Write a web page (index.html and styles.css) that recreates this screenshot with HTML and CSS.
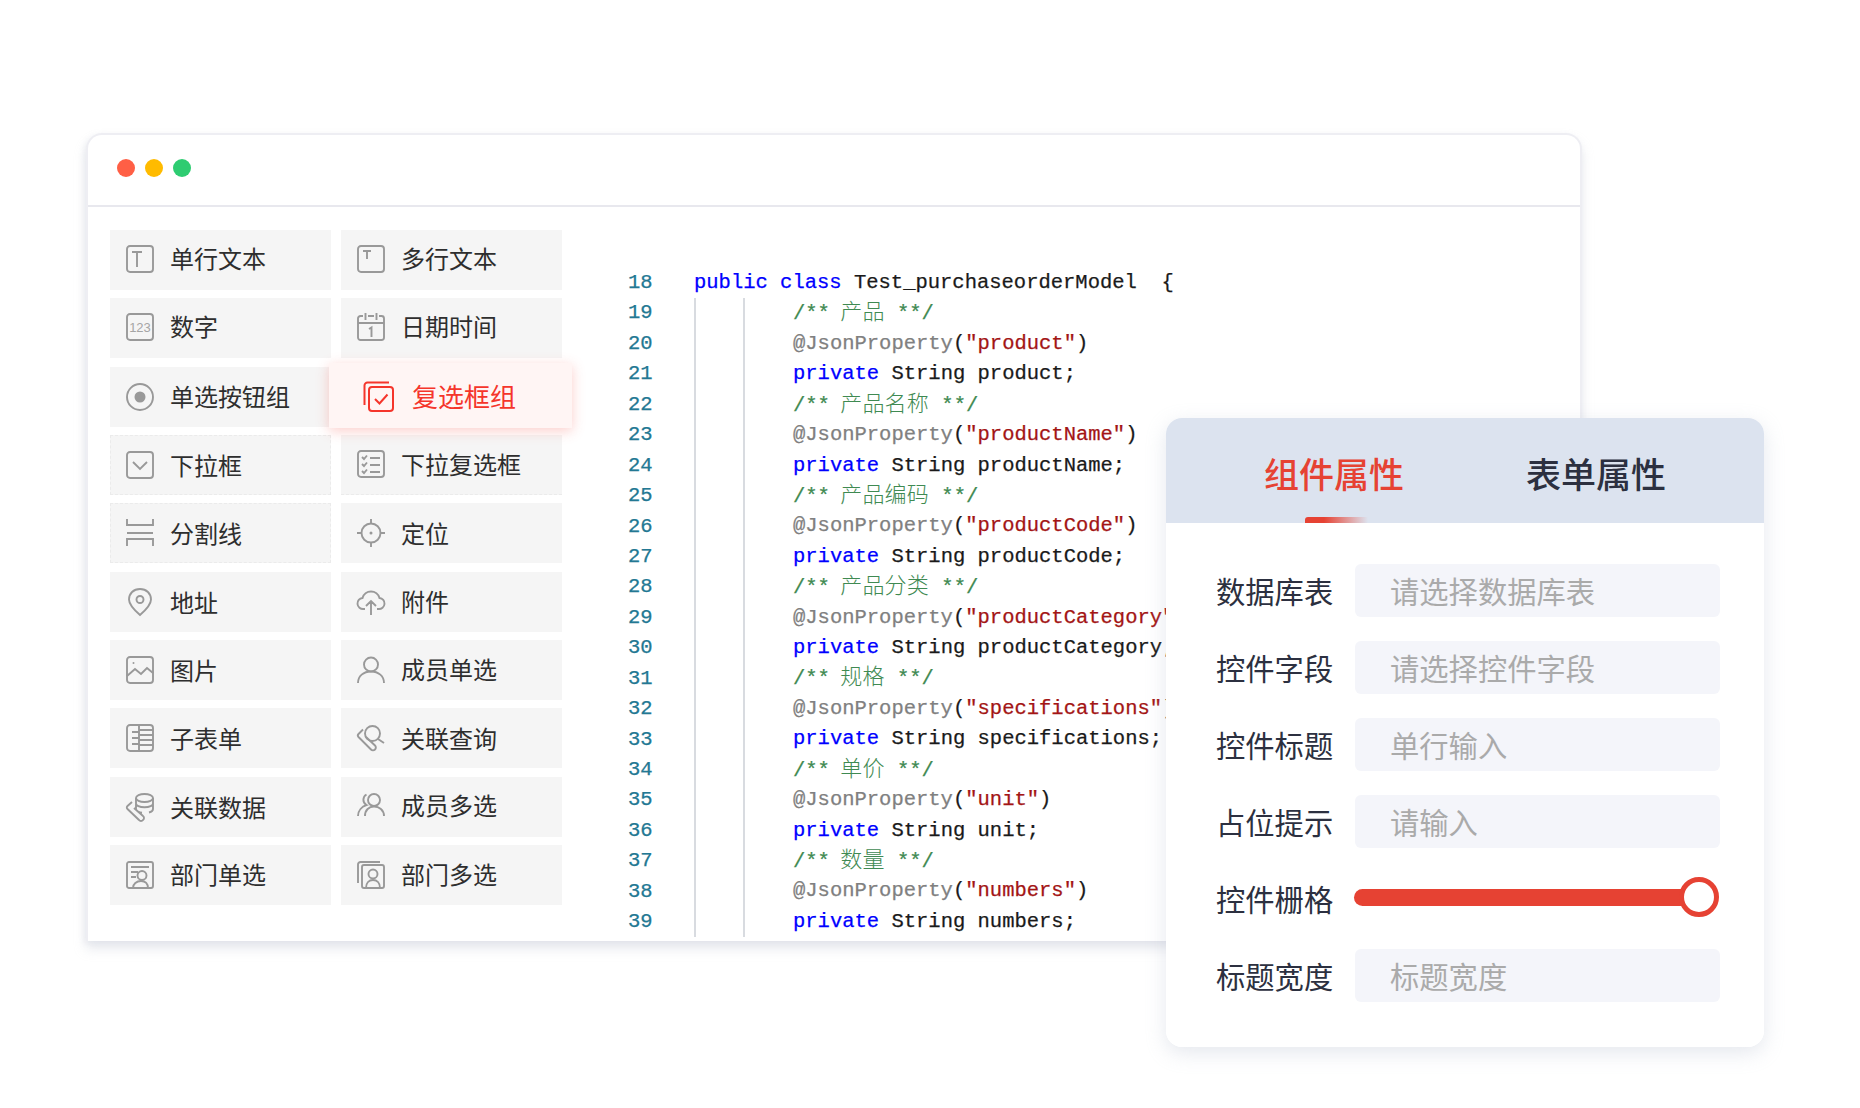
FILE: index.html
```html
<!DOCTYPE html>
<html lang="zh-CN">
<head>
<meta charset="utf-8">
<title>表单设计</title>
<link rel="stylesheet" href="styles.css">
</head>
<body>
<div class="stage">
  <section class="window">
    <header class="titlebar">
      <span class="dot dot-red"></span><span class="dot dot-yellow"></span><span class="dot dot-green"></span>
    </header>
    <div class="window-body">
      <div class="palette">
        <div class="cell cell-top"><svg class="ic" viewBox="0 0 28 28"><rect x="1" y="1" width="26" height="26" rx="3"/><path d="M6 7h10M11 7v15"/></svg><span>单行文本</span></div>
        <div class="cell cell-top"><svg class="ic" viewBox="0 0 28 28"><rect x="1" y="1" width="26" height="26" rx="3"/><path d="M6 6h8M10 6v8"/></svg><span>多行文本</span></div>
        <div class="cell cell-top"><svg class="ic" viewBox="0 0 28 28"><rect x="1" y="1" width="26" height="26" rx="3"/><text x="14" y="19" class="ic-text">123</text></svg><span>数字</span></div>
        <div class="cell cell-top"><svg class="ic" viewBox="0 0 28 28"><path d="M6 3H3.500A2.500 2.500 0 0 0 1 5.500V24.500A2.500 2.500 0 0 0 3.500 27H24.500A2.500 2.500 0 0 0 27 24.500V5.500A2.500 2.500 0 0 0 24.500 3H22M11 3h6M1 10h26M8.500 0v7M19.500 0v7M12 16l2.500-1.500V24"/></svg><span>日期时间</span></div>
        <div class="cell cell-up"><svg class="ic" viewBox="0 0 28 28"><circle cx="14" cy="14" r="13"/><circle cx="14" cy="14" r="5.500" class="ic-fill"/></svg><span>单选按钮组</span></div>
        <div class="cell cell-active"><svg class="ic-red" viewBox="0 0 31 31"><path d="M26 1.500H4.500A3 3 0 0 0 1.500 4.500V24"/><rect x="6" y="6" width="24" height="24" rx="3"/><path d="M12 18l4.500 4.500 8-9"/></svg><span>复选框组</span></div>
        <div class="cell cell-dashed"><svg class="ic" viewBox="0 0 28 28"><rect x="1" y="1" width="26" height="26" rx="3"/><path d="M7 11l7 7 7-7"/></svg><span>下拉框</span></div>
        <div class="cell cell-dash-bottom"><svg class="ic" viewBox="0 0 28 28"><rect x="1" y="1" width="26" height="26" rx="3"/><path d="M5 7l2 2 3-3.500M5 14l2 2 3-3.500M5 21l2 2 3-3.500M13 8h10M13 15h10M13 22h10"/></svg><span>下拉复选框</span></div>
        <div class="cell cell-dashed"><svg class="ic" viewBox="0 0 28 28"><path d="M1 0v6h26V0M1 14h26M1 27v-7h26v7"/></svg><span>分割线</span></div>
        <div class="cell"><svg class="ic" viewBox="0 0 28 28"><circle cx="14" cy="14" r="9.500"/><circle cx="14" cy="14" r="1.500" class="ic-fill"/><path d="M14 0v4.500M14 23.500V28M0 14h4.500M23.500 14H28"/></svg><span>定位</span></div>
        <div class="cell"><svg class="ic" viewBox="0 0 28 28"><path d="M14 1C7.500 1 3 5.500 3 11.500c0 6 7 12 11 15.500 4-3.500 11-9.500 11-15.500C25 5.500 20.500 1 14 1z"/><circle cx="14" cy="11.500" r="3.500"/></svg><span>地址</span></div>
        <div class="cell cell-up"><svg class="ic" viewBox="0 0 28 28"><path d="M8 21H6.500A5.500 5.500 0 0 1 5.500 10 8.800 8.800 0 0 1 22.500 10 5.500 5.500 0 0 1 21.500 21H20M14 27V13M9 18l5-5 5 5"/></svg><span>附件</span></div>
        <div class="cell"><svg class="ic" viewBox="0 0 28 28"><rect x="1" y="1" width="26" height="26" rx="3"/><path d="M1 20l8-7 6 5 6-6 6 5"/><circle cx="7.500" cy="7" r="1" class="ic-fill"/></svg><span>图片</span></div>
        <div class="cell cell-up"><svg class="ic" viewBox="0 0 28 28"><circle cx="14" cy="8.500" r="7"/><path d="M1 27c0-7 5.500-11.500 13-11.500S27 20 27 27"/></svg><span>成员单选</span></div>
        <div class="cell"><svg class="ic" viewBox="0 0 28 28"><rect x="1" y="1" width="26" height="26" rx="3"/><path d="M13 1v26M6 8h7M6 14h7M6 20h7M13 6h14M13 11h14M13 16h14M13 21h14"/></svg><span>子表单</span></div>
        <div class="cell"><svg class="ic" viewBox="0 0 28 28"><circle cx="15.500" cy="9.500" r="7.500"/><path d="M21 15l6 4M6 5.500L1.500 10a2.200 2.200 0 0 0 0 3L14 25.500a2.800 2.800 0 0 0 4 0 2.800 2.800 0 0 0 0-4L9 13"/></svg><span>关联查询</span></div>
        <div class="cell"><svg class="ic" viewBox="0 0 28 28"><ellipse cx="18.500" cy="5" rx="8.500" ry="4"/><path d="M10 5v11c0 2 3.500 3.500 6 3.800M27 5v11c0 1.500-1.500 2.800-4 3.500M10 10.500c0 2 3.500 3.800 8.500 3.800s8.500-1.800 8.500-3.800M6 9L1.500 13a2 2 0 0 0 0 3L13 27a2.500 2.500 0 0 0 4 0 2.500 2.500 0 0 0 0-4L8 15"/></svg><span>关联数据</span></div>
        <div class="cell cell-top"><svg class="ic" viewBox="0 0 28 28"><circle cx="17" cy="8" r="6"/><path d="M8 24c0-6 4-9.500 9-9.500s10 3.500 10 9.500M9.500 2.500a6 6 0 0 0 0 10.500C5 14.500 1 18.500 1 24"/></svg><span>成员多选</span></div>
        <div class="cell cell-up"><svg class="ic" viewBox="0 0 28 28"><rect x="1" y="1" width="26" height="26" rx="2"/><path d="M5 6h18M5 11h7M5 16h5M7 27c0-4 3.500-7 8-7s7 3 7 7"/><circle cx="16" cy="14.500" r="4.500"/></svg><span>部门单选</span></div>
        <div class="cell cell-up"><svg class="ic" viewBox="0 0 28 28"><path d="M23 1H3.500A2.500 2.500 0 0 0 1 3.500V22"/><rect x="5" y="4" width="22" height="23" rx="2"/><circle cx="16" cy="13" r="4.500"/><path d="M9 27c0-5 3-8 7-8s7 3 7 8"/></svg><span>部门多选</span></div>
      </div>
      <div class="code">
        <div class="numbers">
          <div>18</div><div>19</div><div>20</div><div>21</div><div>22</div><div>23</div><div>24</div><div>25</div><div>26</div><div>27</div><div>28</div><div>29</div><div>30</div><div>31</div><div>32</div><div>33</div><div>34</div><div>35</div><div>36</div><div>37</div><div>38</div><div>39</div>
        </div>
        <div class="source">
          <div class="ln"><span class="kw">public class</span> Test_purchaseorderModel  {</div>
          <div class="guides">
            <div class="ln cm">/** <span class="cn">产品</span> **/</div>
            <div class="ln"><span class="an">@JsonProperty</span>(<span class="st">"product"</span>)</div>
            <div class="ln"><span class="kw">private</span> String product;</div>
            <div class="ln cm">/** <span class="cn">产品名称</span> **/</div>
            <div class="ln"><span class="an">@JsonProperty</span>(<span class="st">"productName"</span>)</div>
            <div class="ln"><span class="kw">private</span> String productName;</div>
            <div class="ln cm">/** <span class="cn">产品编码</span> **/</div>
            <div class="ln"><span class="an">@JsonProperty</span>(<span class="st">"productCode"</span>)</div>
            <div class="ln"><span class="kw">private</span> String productCode;</div>
            <div class="ln cm">/** <span class="cn">产品分类</span> **/</div>
            <div class="ln"><span class="an">@JsonProperty</span>(<span class="st">"productCategory"</span>)</div>
            <div class="ln"><span class="kw">private</span> String productCategory;</div>
            <div class="ln cm">/** <span class="cn">规格</span> **/</div>
            <div class="ln"><span class="an">@JsonProperty</span>(<span class="st">"specifications"</span>)</div>
            <div class="ln"><span class="kw">private</span> String specifications;</div>
            <div class="ln cm">/** <span class="cn">单价</span> **/</div>
            <div class="ln"><span class="an">@JsonProperty</span>(<span class="st">"unit"</span>)</div>
            <div class="ln"><span class="kw">private</span> String unit;</div>
            <div class="ln cm">/** <span class="cn">数量</span> **/</div>
            <div class="ln"><span class="an">@JsonProperty</span>(<span class="st">"numbers"</span>)</div>
            <div class="ln"><span class="kw">private</span> String numbers;</div>
          </div>
        </div>
      </div>
    </div>
  </section>

  <aside class="panel">
    <nav class="tabs">
      <div class="tab tab-active">组件属性</div>
      <div class="tab">表单属性</div>
    </nav>
    <div class="form">
      <div class="row"><label>数据库表</label><div class="field">请选择数据库表</div></div>
      <div class="row"><label>控件字段</label><div class="field">请选择控件字段</div></div>
      <div class="row"><label>控件标题</label><div class="field">单行输入</div></div>
      <div class="row"><label>占位提示</label><div class="field">请输入</div></div>
      <div class="row"><label>控件栅格</label><div class="slider"><div class="track"></div><div class="thumb"></div></div></div>
      <div class="row"><label>标题宽度</label><div class="field">标题宽度</div></div>
    </div>
  </aside>
</div>
</body>
</html>
```

FILE: styles.css
```css
* { box-sizing: border-box; }
html, body { margin: 0; background: #fff; }
body { font-family: "Noto Sans CJK SC", "Noto Sans", sans-serif; overflow: hidden; }
.stage { position: relative; width: 1860px; height: 1108px; padding: 133px 0 0 86px; }

.window {
  width: 1496px; height: 808px; background: #fff;
  border: 2px solid #eeeef3; border-bottom: 0; border-radius: 16px 16px 0 0;
  box-shadow: 0 8px 12px rgba(190, 195, 210, .35), -2px 2px 6px rgba(190, 195, 210, .2);
}
.titlebar {
  height: 72px; display: flex; align-items: center; gap: 10px; padding: 0 0 5px 29px;
  border-bottom: 2px solid #e8e8ee;
}
.dot { width: 18px; height: 18px; border-radius: 50%; }
.dot-red { background: #ff5f45; }
.dot-yellow { background: #ffbb00; }
.dot-green { background: #2ecc71; }

.window-body { display: flex; height: 734px; overflow: hidden; }
.palette {
  width: 480px; flex: none; padding: 23px 0 0 22px;
  display: grid; grid-template-columns: 221px 221px; column-gap: 10px;
  grid-template-rows: repeat(10, 60px); row-gap: 8.33px; align-content: start;
}
.cell {
  display: flex; align-items: center; gap: 16px; padding-left: 16px;
  background: #f5f5f5; color: #2e2e2e; font-size: 24px; line-height: 1;
  white-space: nowrap;
}
.cell-top { padding-bottom: 2px; }
.cell-top span { padding-bottom: 2px; }
.cell-up span { padding-bottom: 2px; }
.cell-dashed { border: 1px dashed #ebebeb; padding-left: 15px; }
.cell-dash-bottom { border-bottom: 1px dashed #ebebeb; }
.ic { width: 28px; height: 28px; flex: none; fill: none; stroke: #999; stroke-width: 1.9; overflow: visible; }
.ic-fill { fill: #999; stroke: none; }
.ic-text { fill: #a5a5a5; stroke: none; font-family: "Liberation Sans", sans-serif; font-size: 13px; text-anchor: middle; }
.cell-active {
  position: relative; z-index: 2; margin: -4px -10px -1px -12px; padding: 2px 0 0 34px; gap: 18px;
  background: #fff5f4; color: #f5352b; font-size: 26px;
  box-shadow: 0 3px 12px rgba(245, 80, 70, .28);
}
.ic-red { width: 31px; height: 31px; flex: none; fill: none; stroke: #f5352b; stroke-width: 2; }

.code {
  flex: 1; display: flex; padding: 61px 0 0 60px;
  font-family: "Liberation Mono", "Noto Sans CJK SC", monospace; font-size: 20.5px; line-height: 30.43px;
  color: #1a1a1a; -webkit-text-stroke: .25px currentColor;
}
.numbers { width: 66px; flex: none; color: #237893; }
.source { flex: 1; }
.ln { height: 30.43px; white-space: pre; }
.guides {
  padding-left: 99px;
  background:
    linear-gradient(#d8dbe0, #d8dbe0) 0 0 / 2px 100% no-repeat,
    linear-gradient(#d8dbe0, #d8dbe0) 49px 0 / 2px 100% no-repeat;
}
.kw { color: #0000ff; }
.an { color: #808080; }
.st { color: #a31515; }
.cm { color: #3f8a52; }
.cn { font-family: "Noto Sans CJK SC", sans-serif; font-size: 22px; font-weight: 300; letter-spacing: .2px; margin-left: -2px; -webkit-text-stroke: 0; line-height: 1; }

.panel {
  position: absolute; z-index: 1; left: 1166px; top: 418px; width: 598px; height: 629px;
  background: #fff; border-radius: 16px; overflow: hidden;
}
.stage::after {
  content: ""; position: absolute; left: 1166px; top: 418px; width: 598px; height: 629px;
  border-radius: 16px; box-shadow: 0 6px 20px rgba(170, 178, 200, .3); pointer-events: none;
}
.tabs {
  height: 105px; padding-top: 6px; background: #dce3ef;
  display: flex; justify-content: center; gap: 122px;
}
.tab {
  position: relative; width: 140px; text-align: center; font-size: 35px; font-weight: 500;
  line-height: 97px; color: #2c3040; white-space: nowrap;
}
.tab-active { color: #e64233; }
.tab-active::after {
  content: ""; position: absolute; left: 41px; bottom: 0; width: 63px; height: 6px;
  border-radius: 3px 0 0 0; background: linear-gradient(90deg, #e64233 30%, rgba(230, 66, 51, 0));
}
.form { padding: 41px 44px 0 50px; display: flex; flex-direction: column; gap: 24px; }
.row { height: 53px; display: flex; align-items: center; gap: 22px; }
.row label { width: 117px; flex: none; font-size: 29.3px; line-height: 1; color: #2c3040; white-space: nowrap; text-align: right; }
.field {
  flex: 1; height: 53px; padding-left: 35px; border-radius: 6px; background: #f4f5fa;
  color: #aaa; font-size: 29.3px; line-height: 53px; white-space: nowrap;
}
.slider { flex: 1; position: relative; height: 53px; margin-left: -1px; }
.track { position: absolute; left: 0; top: 17px; width: 345px; height: 17px; border-radius: 9px; background: #e64233; }
.thumb {
  position: absolute; left: 325px; top: 5px; width: 40px; height: 40px; border-radius: 50%;
  background: #fff; border: 5px solid #e64233;
}
```
